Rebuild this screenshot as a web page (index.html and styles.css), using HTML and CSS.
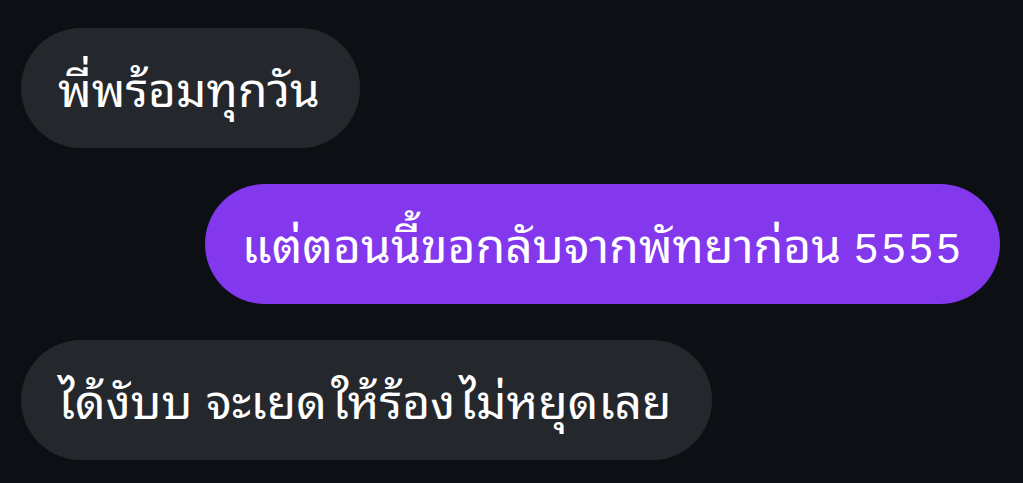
FILE: index.html
```html
<!DOCTYPE html>
<html>
<head>
  <title>Chat</title>
  <link rel="stylesheet" href="styles.css">
</head>
<body>
  <div class="chat">
    <div class="msg msg-in">
      <div class="bubble"><span class="text">พี่พร้อมทุกวัน</span></div>
    </div>
    <div class="msg msg-out">
      <div class="bubble"><span class="text">แต่ตอนนี้ขอกลับจากพัทยาก่อน <span class="num">5555</span></span></div>
    </div>
    <div class="msg msg-in">
      <div class="bubble"><span class="text">ได้งับบ จะเยด<span class="gap"></span>ให้ร้อง<span class="gap"></span>ไม่หยุดเลย</span></div>
    </div>
  </div>
</body>
</html>
```

FILE: styles.css
```css
body {
  margin: 0;
  padding: 0;
  background: #0c1014;
  font-family: 'Liberation Sans', 'Noto Sans Thai Looped', 'Noto Sans Thai', sans-serif;
}

.chat {
  display: flex;
  flex-direction: column;
  gap: 36px;
  padding: 28px 23px 0 21px;
}

.msg {
  display: flex;
}

.msg-out {
  justify-content: flex-end;
}

.bubble {
  height: 120px;
  box-sizing: border-box;
  padding: 0 40px 0 37px;
  border-radius: 60px;
  display: flex;
  align-items: center;
  font-size: 48px;
  color: #ffffff;
  white-space: nowrap;
}

.text {
  margin-top: -6px;
}

.num {
  font-size: 42px;
  letter-spacing: 4px;
  margin-right: -4px;
}

.gap {
  display: inline-block;
  width: 4px;
}

.msg-in .bubble {
  background: #24282c;
}

.msg-out .bubble {
  background: #8338ee;
}
```
